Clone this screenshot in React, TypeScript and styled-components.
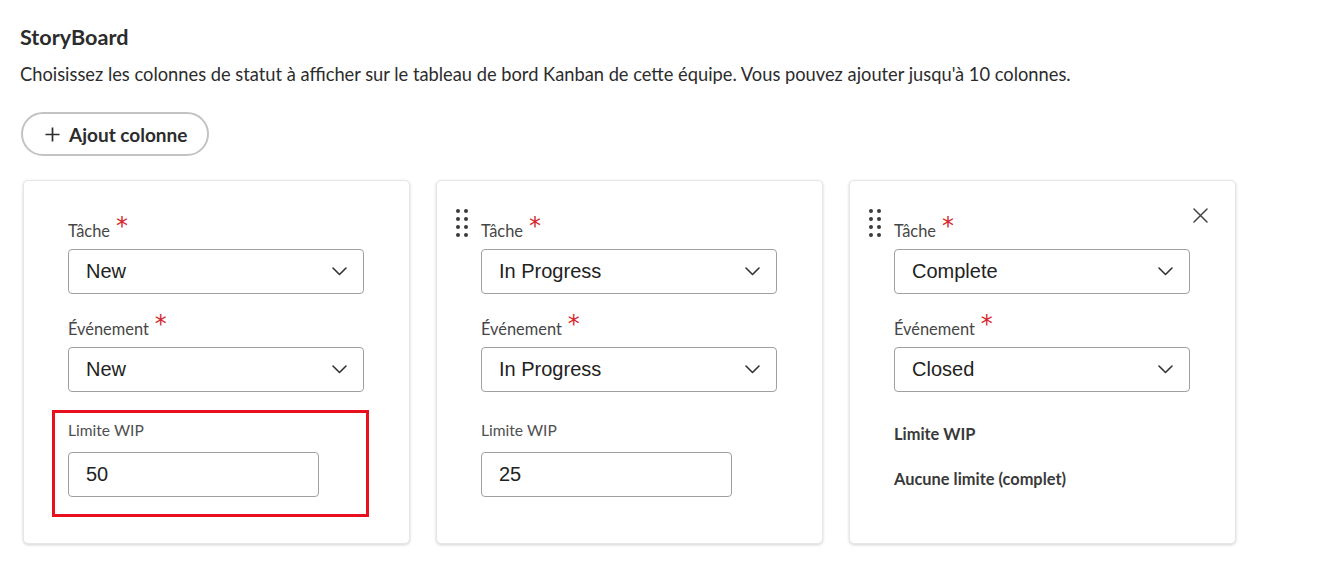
import React from "react";
import styled, { createGlobalStyle } from "styled-components";

const Global = createGlobalStyle`
  html, body { margin: 0; padding: 0; background: #ffffff; }
  body { font-family: Lato, "Open Sans", sans-serif; color: #2c2c2c; }
  * { box-sizing: border-box; }
`;

const Page = styled.div`
  padding: 24px 20px 0 20px;
  width: 1320px;
  height: 582px;
  overflow: hidden;
`;

const Title = styled.h1`
  margin: 0;
  font-family: Lato, sans-serif;
  font-size: 21.6px;
  line-height: 26px;
  font-weight: 700;
  color: #2c2c2c;
`;

const Description = styled.p`
  margin: 12px 0 0 0;
  font-family: Lato, sans-serif;
  font-size: 18.3px;
  line-height: 24px;
  color: #2c2c2c;
`;

const AddButton = styled.button`
  margin: 26px 0 0 1px;
  height: 44px;
  padding: 0 20px 0 22px;
  display: inline-flex;
  align-items: center;
  gap: 9px;
  border: 2px solid #c3c3c3;
  border-radius: 22px;
  background: #fff;
  font-family: Lato, sans-serif;
  font-size: 19px;
  font-weight: 700;
  color: #2c2c2c;
  cursor: pointer;
`;

const Cards = styled.div`
  display: flex;
  gap: 26px;
  margin: 24px 0 0 3px;
`;

const Card = styled.div`
  position: relative;
  width: 387px;
  height: 364px;
  border: 1px solid #e6e6e6;
  border-radius: 5px;
  box-shadow: 0 1px 3px rgba(0, 0, 0, 0.18);
  background: #fff;
  padding: 28px 20px 0 19px;
  display: flex;
  align-items: flex-start;
  gap: 13px;
`;

const Handle = styled.div<{ $hidden?: boolean }>`
  width: 12px;
  flex: none;
  display: grid;
  grid-template-columns: 4px 4px;
  column-gap: 4px;
  row-gap: 4px;
  visibility: ${(p) => (p.$hidden ? "hidden" : "visible")};
  span {
    width: 4px;
    height: 4px;
    border-radius: 50%;
    background: #3a3a3a;
  }
`;

const Content = styled.div`
  width: 296px;
  padding-top: 5px;
  display: flex;
  flex-direction: column;
`;

const LabelRow = styled.div<{ $first?: boolean }>`
  height: 28px;
  margin-top: ${(p) => (p.$first ? "0" : "18px")};
  display: flex;
  align-items: flex-end;
  font-family: Lato, sans-serif;
  font-size: 16.4px;
  line-height: 22px;
  color: #464646;
`;

const Asterisk = styled.span`
  color: #d7262b;
  font-size: 24px;
  line-height: 24px;
  margin-left: 6px;
  align-self: flex-start;
  font-family: "DejaVu Sans", sans-serif;
`;

const Select = styled.div`
  margin-top: 7px;
  height: 45px;
  border: 1px solid #a0a0a0;
  border-radius: 4px;
  padding: 0 16px 0 17px;
  display: flex;
  align-items: center;
  justify-content: space-between;
  font-family: "Liberation Sans", Arial, sans-serif;
  font-size: 20px;
  color: #222;
`;

const WipSection = styled.div<{ $highlight?: boolean }>`
  position: relative;
  margin-top: 28px;
  display: flex;
  flex-direction: column;
  &::after {
    content: "";
    display: ${(p) => (p.$highlight ? "block" : "none")};
    position: absolute;
    top: -10px;
    left: -16px;
    right: -5px;
    bottom: -20px;
    border: 3px solid #e8101f;
  }
`;

const WipLabel = styled.div`
  font-family: Lato, sans-serif;
  font-size: 15.6px;
  line-height: 20px;
  color: #505050;
`;

const WipInput = styled.div`
  margin-top: 12px;
  width: 251px;
  height: 45px;
  border: 1px solid #a0a0a0;
  border-radius: 4px;
  padding: 0 17px;
  display: flex;
  align-items: center;
  font-family: "Liberation Sans", Arial, sans-serif;
  font-size: 20px;
  color: #222;
`;

const StaticText = styled.div<{ $gap: number }>`
  margin-top: ${(p) => p.$gap}px;
  font-family: Lato, sans-serif;
  font-size: 16.4px;
  line-height: 20px;
  font-weight: 700;
  color: #3a3a3a;
`;

const CloseButton = styled.button`
  position: absolute;
  top: 24px;
  right: 25px;
  width: 20px;
  height: 20px;
  padding: 0;
  border: none;
  background: transparent;
  display: flex;
  align-items: center;
  justify-content: center;
  cursor: pointer;
`;

const Chevron = () => (
  <svg width="15" height="9" viewBox="0 0 15 9" fill="none">
    <path d="M1 1l6.5 6.5L14 1" stroke="#333" strokeWidth="1.6" strokeLinecap="round" strokeLinejoin="round" />
  </svg>
);

const Plus = () => (
  <svg width="15" height="15" viewBox="0 0 15 15" fill="none">
    <path d="M7.5 0.5v14M0.5 7.5h14" stroke="#2c2c2c" strokeWidth="1.7" />
  </svg>
);

const Cross = () => (
  <svg width="15" height="15" viewBox="0 0 15 15" fill="none">
    <path d="M1 1l13 13M14 1L1 14" stroke="#444" strokeWidth="1.5" strokeLinecap="round" />
  </svg>
);

const Dots = ({ hidden }: { hidden?: boolean }) => (
  <Handle $hidden={hidden}>
    {Array.from({ length: 8 }).map((_, i) => (
      <span key={i} />
    ))}
  </Handle>
);

type Col = {
  task: string;
  event: string;
  wip?: string;
  highlight?: boolean;
  handle: boolean;
  close: boolean;
};

const columns: Col[] = [
  { task: "New", event: "New", wip: "50", highlight: true, handle: false, close: false },
  { task: "In Progress", event: "In Progress", wip: "25", handle: true, close: false },
  { task: "Complete", event: "Closed", handle: true, close: true },
];

export default function App() {
  return (
    <>
      <Global />
      <Page>
        <Title>StoryBoard</Title>
        <Description>
          Choisissez les colonnes de statut à afficher sur le tableau de bord Kanban de cette équipe. Vous pouvez ajouter jusqu'à 10 colonnes.
        </Description>
        <AddButton>
          <Plus />
          Ajout colonne
        </AddButton>
        <Cards>
          {columns.map((c, i) => (
            <Card key={i}>
              <Dots hidden={!c.handle} />
              <Content>
                <LabelRow $first>
                  Tâche<Asterisk>*</Asterisk>
                </LabelRow>
                <Select>
                  {c.task}
                  <Chevron />
                </Select>
                <LabelRow>
                  Événement<Asterisk>*</Asterisk>
                </LabelRow>
                <Select>
                  {c.event}
                  <Chevron />
                </Select>
                {c.wip ? (
                  <WipSection $highlight={c.highlight}>
                    <WipLabel>Limite WIP</WipLabel>
                    <WipInput>{c.wip}</WipInput>
                  </WipSection>
                ) : (
                  <WipSection>
                    <StaticText $gap={4}>Limite WIP</StaticText>
                    <StaticText $gap={25}>Aucune limite (complet)</StaticText>
                  </WipSection>
                )}
              </Content>
              {c.close && (
                <CloseButton aria-label="Supprimer">
                  <Cross />
                </CloseButton>
              )}
            </Card>
          ))}
        </Cards>
      </Page>
    </>
  );
}
